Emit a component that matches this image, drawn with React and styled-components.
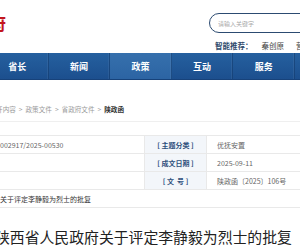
import React from "react";
import styled, { createGlobalStyle } from "styled-components";

const Global = createGlobalStyle`
  html, body { margin: 0; padding: 0; background: #fff; }
  body { overflow: hidden; font-family: "Noto Sans CJK SC", "Noto Sans", sans-serif; }
  * { box-sizing: border-box; }
`;

const Page = styled.div`
  width: 300px;
  height: 250px;
  overflow: hidden;
  background: #fff;
`;

const Header = styled.header`
  display: flex;
  align-items: flex-start;
  height: 53px;
`;

const Logo = styled.div`
  width: 7px;
  flex-shrink: 0;
  display: flex;
  justify-content: flex-end;
  margin-top: 13px;
  white-space: nowrap;
  font-size: 17px;
  line-height: 20px;
  font-weight: 700;
  color: #c3161d;
  letter-spacing: 1px;
`;

const SearchCol = styled.div`
  margin-left: 202px;
  width: 130px;
  flex-shrink: 0;
  display: flex;
  flex-direction: column;
`;

const SearchBox = styled.input`
  margin-top: 13px;
  height: 20px;
  width: 130px;
  border: 1.5px solid #2c4b71;
  border-radius: 10px;
  padding: 0 0 0 8px;
  font-family: inherit;
  font-size: 6px;
  outline: none;
  background: #fff;
  &::placeholder { color: #a8a8a8; }
`;

const Recommend = styled.div`
  margin-top: 7px;
  padding-left: 6px;
  display: flex;
  align-items: center;
  height: 10px;
  font-size: 7.5px;
  white-space: nowrap;
`;

const RecLabel = styled.span`
  font-weight: 700;
  color: #2e4a6c;
  margin-right: 9px;
`;

const RecWord = styled.span`
  color: #444;
  margin-right: 12px;
`;

const Nav = styled.nav`
  height: 27px;
  display: flex;
  background: linear-gradient(#25609f, #1c4f8e);
  border-bottom: 1px solid #17427a;
  overflow: hidden;
`;

const NavList = styled.div`
  display: flex;
  margin-left: -13px;
`;

const NavItem = styled.div`
  width: 61.6px;
  flex-shrink: 0;
  display: flex;
  align-items: center;
  justify-content: center;
  color: #fff;
  font-weight: 700;
  font-size: 9px;
  border-right: 1px solid rgba(20, 60, 110, 0.6);
  box-shadow: inset -1px 0 0 rgba(255, 255, 255, 0.06);
  background: ${(p) => (p.$active ? "linear-gradient(#3670ad, #2c64a3)" : "transparent")};
`;

const Crumbs = styled.div`
  height: 42px;
  border-bottom: 1px solid #efefef;
  padding-top: 20px;
`;

const CrumbLine = styled.div`
  width: 124px;
  height: 18px;
  display: flex;
  justify-content: flex-end;
  align-items: center;
  white-space: nowrap;
  font-size: 6.6px;
  color: #9a9a9a;
`;

const CrumbSep = styled.span`
  margin: 0 3px;
`;

const CrumbCurrent = styled.span`
  color: #333;
  font-weight: 700;
`;

const Table = styled.div`
  margin-top: 13px;
  display: grid;
  grid-template-columns: 144px 63px 1fr;
  grid-auto-rows: 18px;
  border-top: 1px solid #e9e9e9;
`;

const Cell = styled.div`
  display: flex;
  align-items: center;
  border-bottom: 1px solid #e9e9e9;
  font-size: 7px;
  color: ${(p) => (p.$dark ? "#333" : "#666")};
  white-space: nowrap;
  overflow: hidden;
  padding-left: ${(p) => (p.$pad ? "10px" : "0")};
  grid-column: ${(p) => p.$span || "auto"};
`;

const LabelCell = styled.div`
  display: flex;
  align-items: center;
  justify-content: center;
  border-bottom: 1px solid #e9e9e9;
  border-left: 1px solid #e9e9e9;
  border-right: 1px solid #e9e9e9;
  background: #f3f6fa;
  font-size: 7px;
  font-weight: 700;
  color: #2d4f7c;
  white-space: pre;
`;

const Title = styled.h1`
  margin: 20px 0 0 -5px;
  font-size: 14.85px;
  line-height: 17px;
  font-weight: 400;
  color: #222;
  white-space: nowrap;
`;

const navItems = ["省长", "新闻", "政策", "互动", "服务"];

export default function App() {
  return (
    <Page>
      <Global />
      <Header>
        <Logo>陕西省人民政府</Logo>
        <SearchCol>
          <SearchBox placeholder="请输入关键字" />
          <Recommend>
            <RecLabel>智能推荐：</RecLabel>
            <RecWord>秦创原</RecWord>
            <RecWord>营商环境</RecWord>
          </Recommend>
        </SearchCol>
      </Header>
      <Nav>
        <NavList>
          {navItems.map((n) => (
            <NavItem key={n} $active={n === "政策"}>
              {n}
            </NavItem>
          ))}
        </NavList>
      </Nav>
      <Crumbs>
        <CrumbLine>
          <span>政府信息公开内容</span>
          <CrumbSep>&gt;</CrumbSep>
          <span>政策文件</span>
          <CrumbSep>&gt;</CrumbSep>
          <span>省政府文件</span>
          <CrumbSep>&gt;</CrumbSep>
          <CrumbCurrent>陕政函</CrumbCurrent>
        </CrumbLine>
      </Crumbs>
      <Table>
        <Cell>002917/2025-00530</Cell>
        <LabelCell>[ 主题分类 ]</LabelCell>
        <Cell $pad>优抚安置</Cell>
        <Cell />
        <LabelCell>[ 成文日期 ]</LabelCell>
        <Cell $pad>2025-09-11</Cell>
        <Cell />
        <LabelCell>[ 文  号 ]</LabelCell>
        <Cell $pad>陕政函〔2025〕106号</Cell>
        <Cell $span="1 / 4" $dark>关于评定李静毅为烈士的批复</Cell>
      </Table>
      <Title>陕西省人民政府关于评定李静毅为烈士的批复</Title>
    </Page>
  );
}
